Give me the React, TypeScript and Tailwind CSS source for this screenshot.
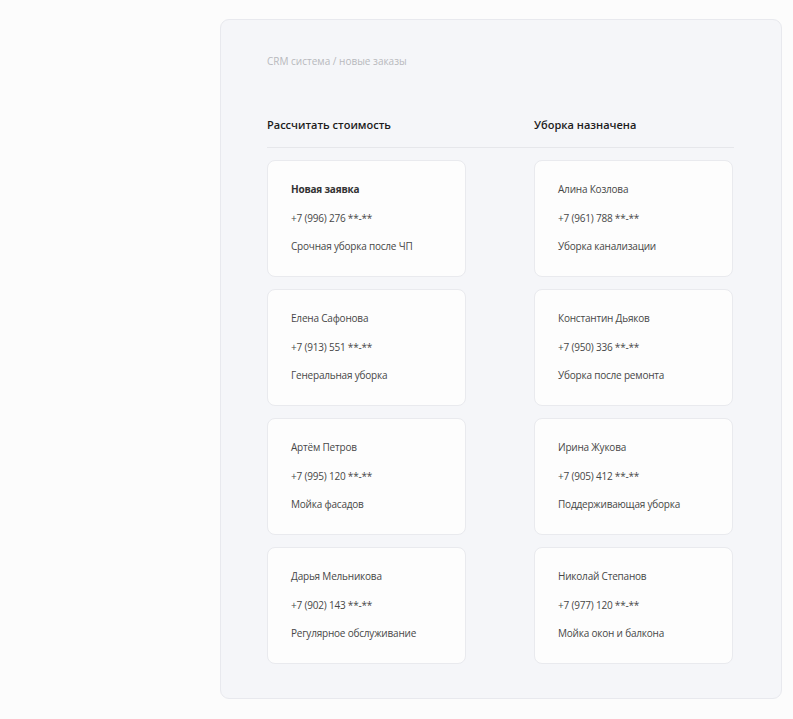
const columns = [
  {
    title: 'Рассчитать стоимость',
    cards: [
      { name: 'Новая заявка', phone: '+7 (996) 276 **-**', service: 'Срочная уборка после ЧП', bold: true },
      { name: 'Елена Сафонова', phone: '+7 (913) 551 **-**', service: 'Генеральная уборка' },
      { name: 'Артём Петров', phone: '+7 (995) 120 **-**', service: 'Мойка фасадов' },
      { name: 'Дарья Мельникова', phone: '+7 (902) 143 **-**', service: 'Регулярное обслуживание' },
    ],
  },
  {
    title: 'Уборка назначена',
    cards: [
      { name: 'Алина Козлова', phone: '+7 (961) 788 **-**', service: 'Уборка канализации' },
      { name: 'Константин Дьяков', phone: '+7 (950) 336 **-**', service: 'Уборка после ремонта' },
      { name: 'Ирина Жукова', phone: '+7 (905) 412 **-**', service: 'Поддерживающая уборка' },
      { name: 'Николай Степанов', phone: '+7 (977) 120 **-**', service: 'Мойка окон и балкона' },
    ],
  },
]

interface Card {
  name: string
  phone: string
  service: string
  bold?: boolean
}

function OrderCard({ card }: { card: Card }) {
  return (
    <div className="h-[117px] rounded-[8px] border border-[#e9eaee] bg-[#fdfdfd] pl-[23px] pt-[20px] flex flex-col gap-[12px] text-[10px] tracking-[-0.02em] leading-[16.5px] text-[#474747]">
      <div className={card.bold ? 'font-bold text-[#333]' : ''}>{card.name}</div>
      <div>{card.phone}</div>
      <div>{card.service}</div>
    </div>
  )
}

export default function App() {
  return (
    <div className="min-h-[719px] w-full bg-[#fcfcfc] pt-[19px] pb-[20px] pl-[220px] pr-[11px]" style={{ fontFamily: '"Open Sans", "Noto Sans", sans-serif' }}>
      <div className="h-[680px] rounded-[9px] border border-[#e8e9ee] bg-[#f5f6f9] pl-[46px] pr-[47px] pt-[33px]">
        {/* Breadcrumb */}
        <div className="text-[10px] leading-[16px] text-[#b8b9bd]">CRM система / новые заказы</div>

        {/* Column headers */}
        <div className="mt-[46px] grid grid-cols-2 gap-x-[67px] border-b border-[#e6e7eb] pb-[12px]">
          {columns.map((col) => (
            <div key={col.title} className="text-[11px] leading-[20px] font-semibold text-[#1c1c1c]">
              {col.title}
            </div>
          ))}
        </div>

        {/* Cards */}
        <div className="mt-[12px] grid grid-cols-2 gap-x-[67px]">
          {columns.map((col) => (
            <div key={col.title} className="flex flex-col gap-[12px] pr-[1px]">
              {col.cards.map((card) => (
                <OrderCard key={card.name} card={card} />
              ))}
            </div>
          ))}
        </div>
      </div>
    </div>
  )
}
